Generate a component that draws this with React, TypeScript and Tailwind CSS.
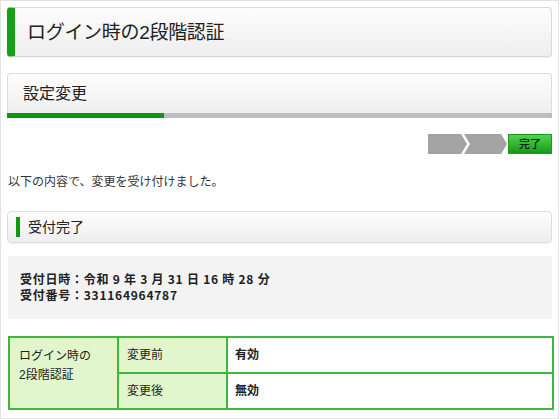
import React from "react";

const font = "font-['Liberation_Sans','Noto_Sans_CJK_JP',sans-serif]";

function StepArrows() {
  return (
    <div className="flex justify-end h-5">
      <svg width="80" height="20" viewBox="0 0 80 20" className="block">
        <polygon points="0,0 33,0 39,10 33,20 0,20" fill="#a3a3a3" />
        <polygon points="36,0 73,0 79,10 73,20 36,20 42,10" fill="#a3a3a3" />
      </svg>
      <div className="w-[44px] h-5 flex items-center justify-center text-[11px] text-black border border-[#1f9a1f] bg-gradient-to-b from-[#4fd44f] to-[#139a13]">
        完了
      </div>
    </div>
  );
}

export default function App() {
  return (
    <div className={`w-[560px] h-[419px] bg-white ${font} text-[#333]`}>
      <div className="w-[559px] h-[419px] border border-[#e3e3e3] px-[6px] pt-[6px] flex flex-col">
        {/* page title */}
        <div className="h-[50px] rounded-[4px] border border-[#d9d9d9] border-l-[8px] border-l-[#15a015] bg-gradient-to-b from-[#fdfdfd] to-[#eeeeee] shadow-[0_1px_1px_rgba(0,0,0,0.06)] flex items-center pl-[12px]">
          <h1 className="text-[19px] text-[#222] leading-none tracking-[-0.3px]">ログイン時の2段階認証</h1>
        </div>

        {/* section header with progress */}
        <div className="mt-[16px] rounded-t-[4px] border border-[#dcdcdc] border-b-0 bg-gradient-to-b from-[#fdfdfd] to-[#efefef] h-[40px] flex items-center pl-[15px]">
          <h2 className="text-[16px] text-[#222] leading-none">設定変更</h2>
        </div>
        <div className="flex h-[5px]">
          <div className="w-[157px] bg-[#0c960c]" />
          <div className="flex-1 bg-[#bdbdbd]" />
        </div>

        <div className="mt-[16px]">
          <StepArrows />
        </div>

        <p className="mt-[19px] text-[12px] leading-[18px] pl-[1px]">以下の内容で、変更を受け付けました。</p>

        {/* result header */}
        <div className="mt-[20px] h-[32px] rounded-[4px] border border-[#dcdcdc] bg-gradient-to-b from-[#fdfdfd] to-[#eeeeee] shadow-[0_1px_1px_rgba(0,0,0,0.05)] flex items-center pl-[8px]">
          <span className="w-[4px] h-[20px] bg-[#0f990f]" />
          <h3 className="ml-[8px] text-[14px] text-[#222] leading-none">受付完了</h3>
        </div>

        <div className="mt-[13px] ml-[1px] h-[63px] bg-[#f3f3f3] pl-[12px] pt-[15px] text-[12px] font-bold leading-[16px] tracking-[0.75px] text-[#222] font-['Noto_Sans_CJK_JP',sans-serif]">
          <p>受付日時：令和 9 年 3 月 31 日 16 時 28 分</p>
          <p>受付番号：331164964787</p>
        </div>

        <table className="mt-[17px] ml-[1px] w-[546px] border-collapse text-[12px] text-[#222]">
          <tbody>
            <tr className="h-[36px]">
              <td rowSpan={2} className="w-[109px] align-top border-2 border-[#3db83d] bg-[#e1f6cd] px-[9px] pt-[9px] leading-[19px]">
                ログイン時の
                <br />
                2段階認証
              </td>
              <td className="w-[109px] border-2 border-[#3db83d] bg-[#e1f6cd] px-[8px]">変更前</td>
              <td className="border-2 border-[#3db83d] bg-white px-[7px] font-bold">有効</td>
            </tr>
            <tr className="h-[36px]">
              <td className="border-2 border-[#3db83d] bg-[#e1f6cd] px-[8px]">変更後</td>
              <td className="border-2 border-[#3db83d] bg-white px-[7px] font-bold">無効</td>
            </tr>
          </tbody>
        </table>
      </div>
    </div>
  );
}
